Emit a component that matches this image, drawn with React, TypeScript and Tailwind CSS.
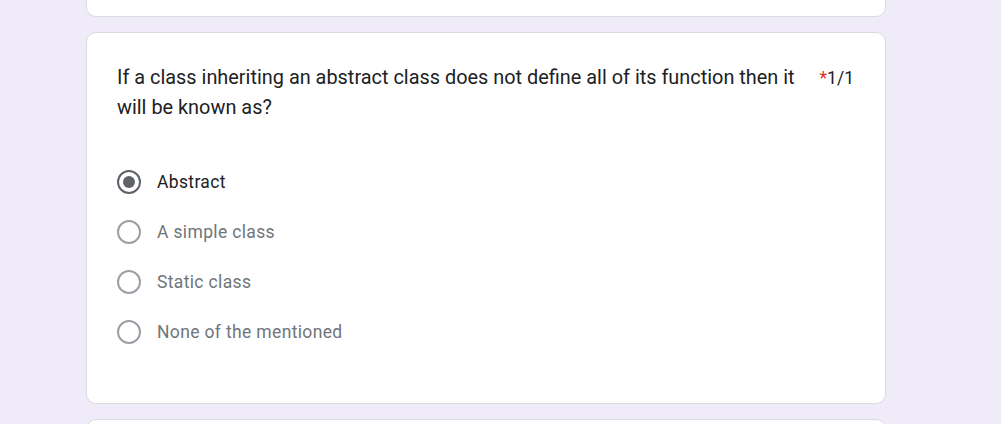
import React from "react";

const options = [
  { label: "Abstract", checked: true },
  { label: "A simple class", checked: false },
  { label: "Static class", checked: false },
  { label: "None of the mentioned", checked: false },
];

export default function App() {
  return (
    <div
      className="w-[1001px] h-[424px] overflow-hidden bg-[#f0ebf8] flex flex-col gap-[15px] pl-[86px]"
      style={{ fontFamily: "Roboto, 'Liberation Sans', sans-serif" }}
    >
      <div className="w-[800px] h-[120px] -mt-[103px] shrink-0 bg-white border border-[#dadce0] rounded-[10px]" />
      <div className="w-[800px] shrink-0 bg-white border border-[#dadce0] rounded-[10px] pt-[30px] pl-[30px] pr-[31px] pb-[46px]">
        <div className="flex items-start justify-between">
          <div className="text-[19.9px] leading-[30px] text-[#202124] w-[700px]">
            If a class inheriting an abstract class does not define all of its function then it will be known as?
          </div>
          <div className="text-[17.5px] leading-[30px] text-[#202124] whitespace-nowrap">
            <span className="text-[#d93025]">*</span>1/1
          </div>
        </div>
        <div className="mt-[34px] flex flex-col">
          {options.map((o) => (
            <div key={o.label} className="h-[50px] flex items-center">
              <div
                className={
                  o.checked
                    ? "w-[24px] h-[24px] rounded-full border-[2.5px] border-[#5f6368] flex items-center justify-center"
                    : "w-[24px] h-[24px] rounded-full border-[2px] border-[#9aa0a6]"
                }
              >
                {o.checked && <div className="w-[12px] h-[12px] rounded-full bg-[#5f6368]" />}
              </div>
              <span
                className={
                  o.checked
                    ? "ml-[16px] text-[17.5px] tracking-[0.35px] text-[#202124]"
                    : "ml-[16px] text-[17.5px] tracking-[0.35px] text-[#70757a]"
                }
              >
                {o.label}
              </span>
            </div>
          ))}
        </div>
      </div>
      <div className="w-[800px] h-[200px] shrink-0 bg-white border border-[#dadce0] rounded-[10px]" />
    </div>
  );
}
